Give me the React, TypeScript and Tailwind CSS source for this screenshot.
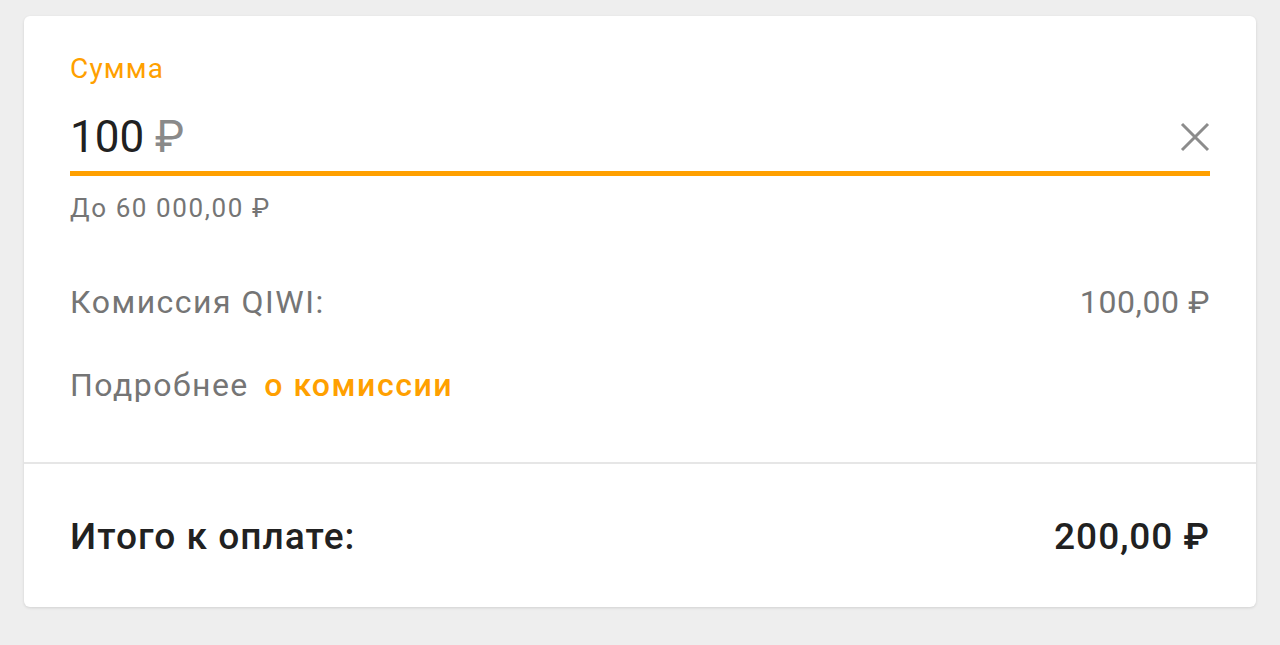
import React from "react";

const App: React.FC = () => {
  return (
    <div className="min-h-screen bg-[#eeeeee] pt-4 px-6 font-['Roboto','Noto_Sans',sans-serif]">
      <div className="bg-white rounded-[6px] shadow-[0_1px_3px_rgba(0,0,0,0.12)]">
        {/* top: amount input */}
        <div className="px-[46px] pt-[37px] pb-[59px]">
          <div className="text-[28px] leading-[32px] tracking-[1.2px] text-[#ffa000]">Сумма</div>

          <div className="mt-[26px] pb-[8px] flex items-center justify-between">
            <div className="text-[44px] leading-[52px] text-[#212121]">
              100 <span className="text-[#8a8a8a]">₽</span>
            </div>
            <svg width="30" height="30" viewBox="0 0 30 30">
              <path d="M2 2 L28 28 M28 2 L2 28" stroke="#8c8c8c" strokeWidth="3" fill="none" />
            </svg>
          </div>
          <div className="h-[5px] bg-[#ffa000]" />

          <div className="mt-[17px] text-[26px] leading-[30px] tracking-[1.6px] text-[#757575]">До 60 000,00 ₽</div>

          <div className="mt-[61px] flex justify-between text-[32px] leading-[36px] text-[#757575]">
            <span className="tracking-[1.5px]">Комиссия QIWI:</span>
            <span className="tracking-[0.6px]">100,00 ₽</span>
          </div>

          <div className="mt-[47px] text-[32px] leading-[36px] tracking-[1.5px] text-[#757575]">
            Подробнее{" "}
            <span className="ml-[6px] font-['Roboto_Medium','Roboto',sans-serif] text-[#ffa000]">о комиссии</span>
          </div>
        </div>

        {/* bottom: total */}
        <div className="border-t-2 border-[#e6e6e6] px-[46px] pt-[51px] pb-[48px] flex justify-between text-[37px] leading-[44px] tracking-[1px] font-['Roboto_Medium','Roboto',sans-serif] text-[#212121]">
          <span>Итого к оплате:</span>
          <span>200,00 ₽</span>
        </div>
      </div>
    </div>
  );
};

export default App;
